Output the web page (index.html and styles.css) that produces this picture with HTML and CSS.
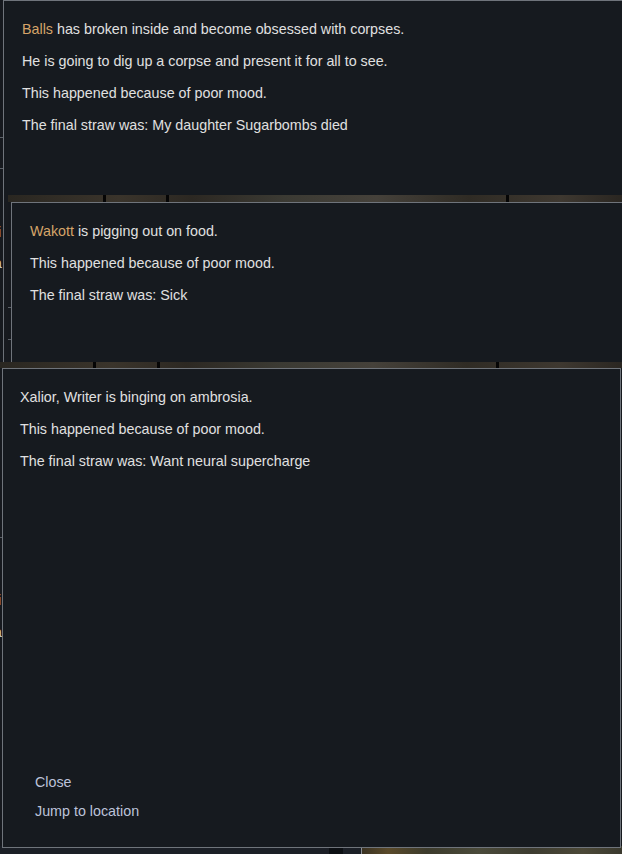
FILE: index.html
```html
<!DOCTYPE html>
<html lang="en">
<head>
<meta charset="utf-8">
<title>Mental breaks</title>
<link rel="stylesheet" href="styles.css">
</head>
<body>
<div class="desk">
  <div class="offscreen">
    <span class="tick o1"></span><span class="tick o2"></span><span class="tick o3"></span>
    <span class="frag f1">i</span><span class="frag f2">a</span>
    <span class="frag f3">i</span><span class="frag f4">a</span>
  </div>

  <div class="map-strip strip-a">
    <span class="mark m1"></span><span class="mark m2"></span><span class="mark m3"></span>
  </div>
  <div class="map-strip strip-b">
    <span class="mark n1"></span><span class="mark n2"></span><span class="mark n3"></span>
  </div>
  <div class="bottom-bar">
    <div class="bar-panel"><span class="bar-block"></span></div>
    <div class="bar-map"></div>
  </div>

  <div class="under-edge">
    <span class="tick t1"></span><span class="tick t2"></span>
  </div>

  <section class="window win-1">
    <p><span class="name">Balls</span> has broken inside and become obsessed with corpses.</p>
    <p>He is going to dig up a corpse and present it for all to see.</p>
    <p>This happened because of poor mood.</p>
    <p>The final straw was: My daughter Sugarbombs died</p>
  </section>

  <section class="window win-2">
    <p><span class="name">Wakott</span> is pigging out on food.</p>
    <p>This happened because of poor mood.</p>
    <p>The final straw was: Sick</p>
  </section>

  <section class="window win-3">
    <div class="body">
      <p>Xalior, Writer is binging on ambrosia.</p>
      <p>This happened because of poor mood.</p>
      <p>The final straw was: Want neural supercharge</p>
    </div>
    <div class="actions">
      <button class="link-btn">Close</button>
      <button class="link-btn">Jump to location</button>
    </div>
  </section>
</div>
</body>
</html>
```

FILE: styles.css
```css
html, body {
  margin: 0;
  padding: 0;
}

body {
  width: 622px;
  height: 854px;
  overflow: hidden;
  background: #16191e;
  font-family: "Liberation Sans", Arial, sans-serif;
  font-size: 14.3px;
  color: #e0e0e0;
}

.desk {
  position: relative;
  width: 622px;
  height: 854px;
  overflow: hidden;
}

/* bits of windows lying off the left edge */
.offscreen {
  position: absolute;
  left: 0;
  top: 0;
  width: 3px;
  height: 854px;
}
.frag {
  position: absolute;
  font-size: 14px;
  line-height: 16px;
  color: #d8d8d8;
}
.f1 { left: -2px; top: 224px; }
.f2 { left: -6px; top: 255px; }
.f3 { left: -2px; top: 592px; }
.f4 { left: -6px; top: 624px; }
.o1 { left: 0; top: 137px; }
.o2 { left: 0; top: 168px; }
.o3 { left: 0; top: 537px; }

/* map texture visible between windows */
.map-strip {
  position: absolute;
  left: 0;
  right: 0;
  height: 8px;
  background: linear-gradient(90deg, #2a2721 0%, #3a342b 18%, #2c2822 30%, #3b3a33 45%, #45413a 60%, #2f2b24 75%, #3e3830 90%, #2a2621 100%);
}
.strip-a { top: 195px; left: 8px; height: 7px; }
.strip-b { top: 362px; height: 6px; }

.mark {
  position: absolute;
  top: 0;
  width: 3px;
  height: 100%;
  background: #050505;
}
.m1 { left: 95px; }
.m2 { left: 158px; }
.m3 { left: 498px; }
.n1 { left: 93px; }
.n2 { left: 157px; }
.n3 { left: 496px; }

.bottom-bar {
  position: absolute;
  left: 0;
  right: 0;
  top: 846px;
  height: 8px;
  display: flex;
}
.bar-panel {
  position: relative;
  width: 361px;
  background: #1b1f26;
  border-right: 1px solid #8a8e94;
}
.bar-block {
  position: absolute;
  left: 329px;
  top: 0;
  width: 14px;
  height: 100%;
  background: #0c0f13;
}
.bar-map {
  flex: 1;
  background: linear-gradient(90deg, #3a3222 0%, #5a4a2a 10%, #3c3b2c 25%, #4a4a3a 45%, #3d3c30 65%, #4b4837 85%, #3a392e 100%);
}

/* edge of a window lying under the others */
.under-edge {
  position: absolute;
  left: 3px;
  top: 0;
  width: 4px;
  height: 362px;
  background: #171a1f;
  border-left: 1px solid #6c7178;
}
.tick {
  position: absolute;
  width: 4px;
  height: 1px;
  background: #5b6067;
}
.t1 { left: 4px; top: 307px; }
.t2 { left: 4px; top: 339px; }

.window {
  position: absolute;
  box-sizing: border-box;
  background: #161a1f;
  border: 1px solid #6f747b;
}

.window p {
  margin: 0 0 16px;
  line-height: 16px;
}

.name {
  color: #d5a469;
}

.win-1 {
  left: 3px;
  top: 0;
  width: 630px;
  height: 195px;
  border-bottom: none;
  padding: 20px 18px;
}

.win-2 {
  left: 11px;
  top: 202px;
  width: 630px;
  height: 160px;
  border-bottom: none;
  padding: 20px 18px;
}

.win-3 {
  left: 2px;
  top: 368px;
  width: 619px;
  height: 480px;
  padding: 20px 17px 28px;
  display: flex;
  flex-direction: column;
  justify-content: space-between;
}

.actions {
  display: flex;
  flex-direction: column;
  align-items: flex-start;
  gap: 13px;
  padding-left: 15px;
}

.link-btn {
  font: inherit;
  font-size: 14.3px;
  line-height: 16px;
  color: #bcc3da;
  background: none;
  border: none;
  padding: 0;
  cursor: pointer;
}
```
